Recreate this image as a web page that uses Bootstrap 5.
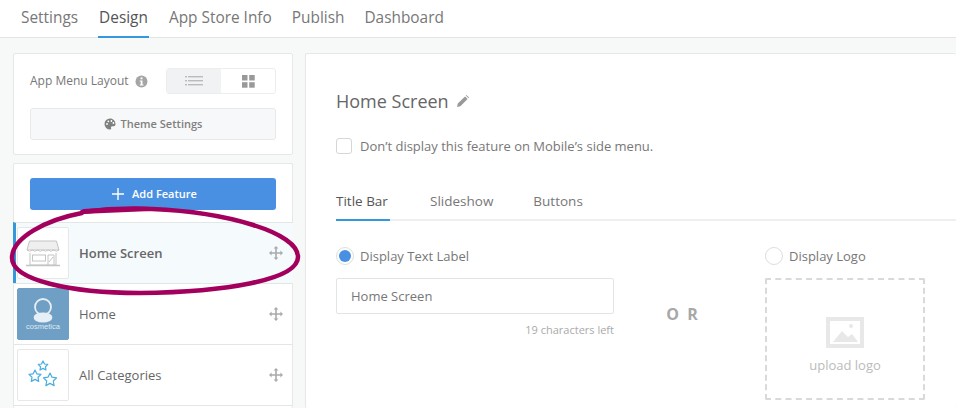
<!DOCTYPE html>
<html lang="en"><head><meta charset="utf-8"><title>Design</title>
<link rel="stylesheet" href="https://cdn.jsdelivr.net/npm/bootstrap@5.3.0/dist/css/bootstrap.min.css">
<style>
html,body{height:408px;overflow:hidden}
body{background:#f7f8f8;font-family:"Open Sans",sans-serif;color:#666;position:relative;font-size:13px}
.topnav{height:38px;background:#fff;border-bottom:1px solid #e3e5e5;padding-left:21px;gap:20px;font-size:15.400px;align-items:stretch}
.topnav a{color:#777;text-decoration:none;line-height:36px;height:38px;padding:0}
.topnav a.on{color:#555;border-bottom:2px solid #3498db;padding:0 1px}
.work{padding:15px 0 0 13px;gap:12px;height:370px}
.sidecol{width:280px;flex:none}
.panel{background:#fff;border:1px solid #e6e8e8;border-radius:2px}
.layoutbox{height:102px;padding:14px 16px;margin-bottom:8px}
.lbl{font-size:12px;color:#777;white-space:nowrap;gap:6px}
.seg{width:110px;height:26px;border:1px solid #eceeee;border-radius:3px;overflow:hidden;flex:none}
.seg>span{flex:1;display:flex;align-items:center;justify-content:center}
.seg>span.act{background:#f1f2f3}
.theme{height:32px;margin-top:14px;background:#f7f8f9;border:1px solid #e8eaea;border-radius:3px;font-size:11px;font-weight:600;color:#808080;gap:5px}
.featbox{height:245px;padding-top:14px;border-bottom:0}
.addbtn{margin:0 16px 12px;height:32px;background:#4a90e2;color:#fff;border:0;border-radius:3px;font-size:11px;font-weight:600;gap:8px;width:246px;padding-left:9px}
.row-item{height:61px;margin-left:-1px;margin-right:-1px;border-top:1px solid #e3e6e6;padding-left:3px;gap:10px;font-size:13px;color:#666;padding-right:10px}
.row-item.sel{background:#f5fafd;border-left:3px solid #3498db;padding-left:0}
.row-item.sel b{font-weight:600}
.row-item b{font-weight:400;padding-top:2px}
.row-item.endrow{height:3px}
.thumb{width:52px;height:52px;border:1px solid #e6e8e8;border-radius:2px;flex:none;background:#fff;display:flex;align-items:center;justify-content:center;margin-left:1px}
.thumb.blue{background:#6f9fc4;border-color:#6f9fc4;flex-direction:column;color:#dfeaf3}
.thumb.blue small{font-size:7.500px;line-height:8px;font-family:"Liberation Sans",sans-serif}
.mainpanel{flex:1 1 auto;min-width:0;height:355px;padding:35px 0 0 30px;border-right:0;border-bottom:0}
.head{font-size:18px;color:#666;line-height:24px;gap:8px}
.chk{width:16px;height:16px;border:1px solid #d4d7d7;border-radius:3px;background:#fff;flex:none}
.chkline{margin-top:24px;gap:8px;font-size:13px;color:#777;line-height:18px}
.tabsline{margin-top:27px;height:39px;border-bottom:2px solid #eef0f0;gap:40px;font-size:13.500px;color:#777}
.tabsline span{line-height:38px;height:39px}
.tabsline .on{color:#555;border-bottom:2px solid #3498db;width:54px}
.formrow{margin-top:26px}
.leftf{width:278px;flex:none}
.radio{width:18px;height:18px;border:1px solid #dcdfdf;border-radius:50%;background:#fff;flex:none;display:flex;align-items:center;justify-content:center}
.radio i{width:12px;height:12px;border-radius:50%;background:#4a90e2;display:block}
.rl{gap:6px;font-size:13px;color:#777;line-height:18px}
.txt{height:36px;margin-top:13px;border:1px solid #e3e5e5;border-radius:2px;padding:0 14px;line-height:34px;font-size:13px;color:#777}
.left19{font-size:11px;color:#aaa;text-align:right;margin-top:9px;line-height:14px}
.orw{width:151px;flex:none;text-align:center;font-weight:700;font-size:16px;color:#a8a8a8;padding-top:56px;padding-right:13px;letter-spacing:2px;line-height:22px}
.upl{width:160px;height:122px;margin-top:13px;border:2px dashed #d9d9d9;border-radius:2px;color:#bbb;font-size:13px;gap:8px;padding-top:14px}
.ring{position:absolute;left:0;top:0;pointer-events:none}
</style></head><body>
<nav class="nav topnav">
<a href="#">Settings</a><a href="#" class="on">Design</a><a href="#">App Store Info</a><a href="#">Publish</a><a href="#">Dashboard</a>
</nav>
<div class="d-flex work">
<div class="sidecol">
<div class="panel layoutbox">
<div class="d-flex align-items-center justify-content-between">
<span class="lbl d-flex align-items-center">App Menu Layout
<svg width="13" height="13" viewBox="0 0 13 13"><circle cx="6.500" cy="6.500" r="6" fill="#a5a5a5"/><rect x="5.600" y="2.400" width="1.900" height="1.900" fill="#fff"/><path d="M4.700 5.400h2.800v4h1v1.200H4.700V9.400h1V6.500h-1z" fill="#fff"/></svg></span>
<div class="seg d-flex">
<span class="act"><svg width="18" height="12" viewBox="0 0 18 12" fill="#bbb"><rect x="0" y="1" width="2" height="1.400"/><rect x="3" y="1" width="15" height="1.400"/><rect x="0" y="5" width="2" height="1.400"/><rect x="3" y="5" width="15" height="1.400"/><rect x="0" y="9" width="2" height="1.400"/><rect x="3" y="9" width="15" height="1.400"/></svg></span>
<span><svg width="13" height="13" viewBox="0 0 13 13" fill="#999"><rect width="5.500" height="5.500"/><rect x="7.200" width="5.500" height="5.500"/><rect y="7.200" width="5.500" height="5.500"/><rect x="7.200" y="7.200" width="5.500" height="5.500"/></svg></span>
</div></div>
<div class="theme d-flex align-items-center justify-content-center">
<svg width="12" height="12" viewBox="0 0 12 12"><path d="M6 .5a5.500 5.500 0 1 0 0 11c1 0 1.400-.7 1.100-1.500-.4-1 .2-1.800 1.200-1.800h1.400c1.100 0 1.800-.8 1.800-2C11.500 2.800 9.100.5 6 .5z" fill="#808080"/><circle cx="3" cy="6" r=".9" fill="#fff"/><circle cx="4.300" cy="3.300" r=".9" fill="#fff"/><circle cx="7.400" cy="3" r=".9" fill="#fff"/><circle cx="9.400" cy="5" r=".9" fill="#fff"/></svg>
Theme Settings</div>
</div>
<div class="panel featbox">
<button class="addbtn d-flex align-items-center justify-content-center" type="button">
<svg width="12" height="12" viewBox="0 0 12 12"><path d="M5.300 0h1.400v5.300H12v1.400H6.700V12H5.300V6.700H0V5.300h5.300z" fill="#fff"/></svg>Add Feature</button>
<div class="row-item sel d-flex align-items-center">
<span class="thumb"><svg width="34" height="27" viewBox="0 0 34 27" fill="none" stroke="#c4c4c4" stroke-width="1"><path d="M3.500 1h27l2.500 9H1z" fill="#efefef"/><path d="M1 10q2.700 2.400 5.300 0q2.700 2.400 5.300 0q2.700 2.400 5.400 0q2.700 2.400 5.300 0q2.700 2.400 5.300 0q2.700 2.400 5.400 0" fill="#fafafa"/><path d="M4 13v12h26V13"/><rect x="6.500" y="15" width="13" height="6"/><path d="M22 25V15h6v10M23 22l4-5" /><path d="M0 25.500h34" stroke-width="1.500"/></svg></span>
<b class="flex-grow-1">Home Screen</b>
<svg width="14" height="14" viewBox="0 0 14 14"><path d="M7 0l2.400 2.600H7.800v3.600h3.600V4.600L14 7l-2.600 2.400V7.800H7.800v3.600h1.600L7 14l-2.400-2.600h1.600V7.800H2.600v1.600L0 7l2.600-2.400v1.600h3.600V2.600H4.600z" fill="#aaa"/></svg>
</div>
<div class="row-item d-flex align-items-center">
<span class="thumb blue"><svg width="22" height="26" viewBox="0 0 22 26" fill="none" stroke="#e6eff6" stroke-width="1.800"><circle cx="11" cy="10" r="8"/><ellipse cx="11" cy="20.500" rx="8.500" ry="4" fill="#e6eff6"/></svg><small>cosmetica</small></span>
<b class="flex-grow-1">Home</b>
<svg width="14" height="14" viewBox="0 0 14 14"><path d="M7 0l2.400 2.600H7.800v3.600h3.600V4.600L14 7l-2.600 2.400V7.800H7.800v3.600h1.600L7 14l-2.400-2.600h1.600V7.800H2.600v1.600L0 7l2.600-2.400v1.600h3.600V2.600H4.600z" fill="#aaa"/></svg>
</div>
<div class="row-item d-flex align-items-center">
<span class="thumb"><svg width="32" height="30" viewBox="0 0 32 30" fill="none" stroke="#4aaee0" stroke-width="1.200" stroke-linejoin="round"><path d="M16 1l1.500 3 3.300.4-2.400 2.300.6 3.300-3-1.600-3 1.600.6-3.300-2.400-2.300 3.300-.4z"/><path d="M8 10l1.800 3.800 4.200.6-3 2.900.7 4.100L8 19.400l-3.700 2 .7-4.100-3-2.900 4.200-.6z"/><path d="M23 13l2 4.200 4.600.6-3.300 3.200.8 4.600-4.100-2.200-4.100 2.200.8-4.600-3.300-3.200 4.600-.6z"/></svg></span>
<b class="flex-grow-1">All Categories</b>
<svg width="14" height="14" viewBox="0 0 14 14"><path d="M7 0l2.400 2.600H7.800v3.600h3.600V4.600L14 7l-2.600 2.400V7.800H7.800v3.600h1.600L7 14l-2.400-2.600h1.600V7.800H2.600v1.600L0 7l2.600-2.400v1.600h3.600V2.600H4.600z" fill="#aaa"/></svg>
</div>
<div class="row-item endrow"></div>
</div>
</div>
<div class="panel mainpanel">
<div class="head d-flex align-items-center">Home Screen
<svg width="12" height="12" viewBox="0 0 12 12"><path d="M0 12l.8-3.400L8 1.400 10.600 4 3.400 11.200zM8.800.6 9.400 0 12 2.600l-.6.600z" fill="#999"/></svg></div>
<div class="chkline d-flex align-items-center"><span class="chk"></span>Don’t display this feature on Mobile’s side menu.</div>
<div class="tabsline d-flex"><span class="on">Title Bar</span><span>Slideshow</span><span>Buttons</span></div>
<div class="formrow d-flex">
<div class="leftf">
<div class="rl d-flex align-items-center"><span class="radio"><i></i></span>Display Text Label</div>
<div class="txt">Home Screen</div>
<div class="left19">19 characters left</div>
</div>
<div class="orw">O R</div>
<div>
<div class="rl d-flex align-items-center"><span class="radio"></span>Display Logo</div>
<div class="upl d-flex flex-column align-items-center justify-content-center">
<svg width="38" height="31" viewBox="0 0 38 31"><path fill-rule="evenodd" d="M0 0h38v31H0zM4 4v23h30V4z" fill="#e8e8e8"/><path d="M7 25l9-11 6 6 4-3 6 8z" fill="#e8e8e8"/><circle cx="25" cy="9" r="2" fill="#e8e8e8"/></svg>
upload logo</div>
</div>
</div>
</div>
</div>
<svg class="ring" width="956" height="408" viewBox="0 0 956 408" fill="none"><path d="M82 212C105 209 130 208 152 209C225 212 298 232 298 257C298 280 225 292 140 293C70 293 12 280 12 258C12 238 45 220 82 213" stroke="#a2005c" stroke-width="4.500" stroke-linecap="round"/><path d="M81 214L83 209C105 208 130 206 150 207L151 211Z" fill="#a2005c"/></svg>
</body></html>
